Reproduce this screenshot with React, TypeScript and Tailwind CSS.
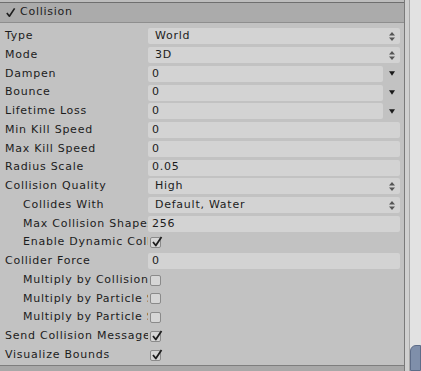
import React from 'react';

type Row =
  | { label: string; indent?: boolean; kind: 'enum'; value: string }
  | { label: string; indent?: boolean; kind: 'curve'; value: string }
  | { label: string; indent?: boolean; kind: 'text'; value: string }
  | { label: string; indent?: boolean; kind: 'check'; checked: boolean };

const rows: Row[] = [
  { label: 'Type', kind: 'enum', value: 'World' },
  { label: 'Mode', kind: 'enum', value: '3D' },
  { label: 'Dampen', kind: 'curve', value: '0' },
  { label: 'Bounce', kind: 'curve', value: '0' },
  { label: 'Lifetime Loss', kind: 'curve', value: '0' },
  { label: 'Min Kill Speed', kind: 'text', value: '0' },
  { label: 'Max Kill Speed', kind: 'text', value: '0' },
  { label: 'Radius Scale', kind: 'text', value: '0.05' },
  { label: 'Collision Quality', kind: 'enum', value: 'High' },
  { label: 'Collides With', indent: true, kind: 'enum', value: 'Default, Water' },
  { label: 'Max Collision Shapes', indent: true, kind: 'text', value: '256' },
  { label: 'Enable Dynamic Colliders', indent: true, kind: 'check', checked: true },
  { label: 'Collider Force', kind: 'text', value: '0' },
  { label: 'Multiply by Collision Angle', indent: true, kind: 'check', checked: false },
  { label: 'Multiply by Particle Speed', indent: true, kind: 'check', checked: false },
  { label: 'Multiply by Particle Size', indent: true, kind: 'check', checked: false },
  { label: 'Send Collision Messages', kind: 'check', checked: true },
  { label: 'Visualize Bounds', kind: 'check', checked: true },
];

function Tick({ className }: { className?: string }) {
  return (
    <svg viewBox="0 0 12 12" className={className}>
      <path d="M2 6.5 L4.8 10 L10.5 1.5" fill="none" stroke="#1e1e1e" strokeWidth={1.8} strokeLinejoin="round" />
    </svg>
  );
}

function UpDown() {
  return (
    <svg viewBox="0 0 6 9" className="w-[6px] h-[9px]">
      <path d="M3 0 L6 3.5 H0 Z M3 9 L0 5.5 H6 Z" fill="#555" />
    </svg>
  );
}

function Down() {
  return (
    <svg viewBox="0 0 7 5" className="w-[6px] h-[5px]">
      <path d="M0 0 H7 L3.5 5 Z" fill="#1a1a1a" />
    </svg>
  );
}

function Value({ row }: { row: Row }) {
  if (row.kind === 'check') {
    return (
      <div className="relative h-full flex items-center pl-[2px]">
        <div className="w-[11px] h-[11px] border border-[#8a8a8a] bg-[#d6d6d6] rounded-[2px]" />
        {row.checked && <Tick className="absolute left-[3px] top-[2px] w-[12px] h-[13px]" />}
      </div>
    );
  }
  if (row.kind === 'curve') {
    return (
      <div className="h-full flex items-center">
        <div className="flex-1 h-[16px] bg-[#d3d3d3] rounded-[2px] pl-[4px] flex items-center">{row.value}</div>
        <div className="w-[17px] flex justify-center">
          <Down />
        </div>
      </div>
    );
  }
  return (
    <div className="h-full flex items-center">
      <div className="flex-1 h-[16px] bg-[#d3d3d3] rounded-[2px] flex items-center justify-between pr-[5px] pl-[4px]">
        <span className={row.kind === 'enum' ? 'pl-[3px]' : ''}>{row.value}</span>
        {row.kind === 'enum' && <UpDown />}
      </div>
    </div>
  );
}

export default function App() {
  return (
    <div
      className="w-[421px] h-[371px] overflow-hidden bg-[#c2c2c2] flex text-[#1c1c1c] text-[11px] tracking-[0.75px]"
      style={{ fontFamily: '"DejaVu Sans", Verdana, sans-serif' }}
    >
      {/* Inspector panel */}
      <div className="w-[405px] h-full flex flex-col border-r border-[#7a7a7a]">
        <div className="h-[3px] bg-[#bdbdbd] border-b border-[#6f6f6f]" />
        {/* Header */}
        <div className="h-[20px] bg-[#ababab] border-b border-[#8e8e8e] flex items-center pl-[5px] gap-[4px]">
          <Tick className="w-[11px] h-[13px]" />
          <span>Collision</span>
        </div>
        {/* Rows */}
        <div className="flex flex-col pt-[4px] pr-[4px]">
          {rows.map((row) => (
            <div key={row.label} className="h-[18.75px] grid grid-cols-[148px_1fr] items-center">
              <div className={`overflow-hidden whitespace-nowrap ${row.indent ? 'pl-[23px]' : 'pl-[5px]'}`}>{row.label}</div>
              <Value row={row} />
            </div>
          ))}
        </div>
        <div className="flex-1" />
        <div className="h-[6px] bg-[#a8a8a8] border-t border-[#7e7e7e]" />
      </div>
      {/* Scrollbar */}
      <div className="w-[16px] h-full flex">
        <div className="w-[5px] bg-[#d0d0d0] border-r border-[#a9a9a9]" />
        <div className="flex-1 bg-[#e2e2e2] flex flex-col justify-end">
          <div className="h-[26px] bg-[#7f8faa] rounded-tl-[6px] border border-[#5d6c88]" />
        </div>
      </div>
    </div>
  );
}
